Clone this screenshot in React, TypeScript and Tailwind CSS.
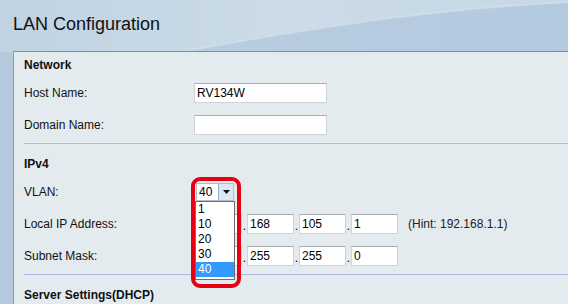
import React from "react";

const font = { fontFamily: '"Liberation Sans", Arial, sans-serif' };

function Row({ label, children }: { label: string; children?: React.ReactNode }) {
  return (
    <div className="flex items-center h-[32px]">
      <div className="w-[170px] text-[12px] text-[#111]">{label}</div>
      <div className="flex items-center">{children}</div>
    </div>
  );
}

function TextBox({ value = "", w }: { value?: string; w: string }) {
  return (
    <div
      className={`${w} h-[20px] bg-white border border-[#d0d4d8] border-t-[#a8acb0] pl-[2px] text-[12px] leading-[18px] text-black`}
    >
      {value}
    </div>
  );
}

function Ip({ parts }: { parts: string[] }) {
  return (
    <div className="flex items-center ml-px">
      {parts.map((p, i) => (
        <React.Fragment key={i}>
          {i > 0 && <span className="w-[5px] text-[12px] leading-[20px] pt-[3px] text-center">.</span>}
          <TextBox value={p} w="w-[47px]" />
        </React.Fragment>
      ))}
    </div>
  );
}

function Heading({ children, first }: { children: React.ReactNode; first?: boolean }) {
  return (
    <div className={`${first ? "" : "pt-[7px]"} h-[25px] flex items-center font-bold text-[12px] text-[#111] box-content`}>
      {children}
    </div>
  );
}

function Sep() {
  return <div className="mt-[2px] h-px bg-[#b3b5e3]" />;
}

export default function App() {
  return (
    <div className="w-[568px] h-[304px] overflow-hidden relative bg-[#b6cade]" style={font}>
      <svg className="absolute left-0 top-0" width="568" height="52" viewBox="0 0 568 52">
        <defs>
          <linearGradient id="g1" x1="0" y1="0" x2="1" y2="0">
            <stop offset="0" stopColor="#c1d3e3" />
            <stop offset="0.5" stopColor="#cbdbe7" />
            <stop offset="1" stopColor="#c6d8e6" />
          </linearGradient>
          <linearGradient id="g2" x1="0" y1="0" x2="1" y2="0">
            <stop offset="0" stopColor="#b9cde0" />
            <stop offset="1" stopColor="#b4cadf" />
          </linearGradient>
        </defs>
        <rect width="568" height="52" fill="url(#g1)" />
        <path d="M180 52 C 300 30, 420 10, 568 2 L568 52 Z" fill="url(#g2)" />
        <path d="M180 52 C 300 30, 420 10, 568 2" stroke="#d3e0ea" strokeWidth="2" fill="none" opacity="0.7" />
      </svg>
      <div className="relative h-[51px] pl-[13px] pt-[15px] text-[18px] leading-[18px] text-[#111]">
        LAN Configuration
      </div>
      <div className="relative flex">
        <div className="w-[13px] shrink-0" />
        <div className="flex-1 h-[260px] bg-[#e4ebef] border-t border-l border-t-[#7f8e9c] border-l-[#8c9aa8] pl-[10px]">
          <Heading first>Network</Heading>
          <Row label="Host Name:">
            <TextBox value="RV134W" w="w-[133px]" />
          </Row>
          <Row label="Domain Name:">
            <TextBox w="w-[133px]" />
          </Row>
          <Sep />
          <Heading>IPv4</Heading>
          <div className="relative z-10">
            <Row label="VLAN:">
              <div className="relative ml-[2px] w-[38px] h-[18px] bg-white border border-[#b4bcc6] flex">
                <div className="flex-1 text-[12px] leading-[16px] pl-[2px] text-black">40</div>
                <div className="w-[15px] h-full bg-[#dbe7f4] border-l border-[#8eacd2] flex items-center justify-center">
                  <svg width="7" height="4" viewBox="0 0 7 4">
                    <path d="M0 0 H7 L3.5 4 Z" fill="#111" />
                  </svg>
                </div>
                <div className="absolute left-[-2px] top-[17px] w-[40px] bg-white border border-[#6c6c6c] text-[12px]">
                  {["1", "10", "20", "30", "40"].map((v) => (
                    <div
                      key={v}
                      className={`h-[15px] leading-[15px] pl-[2px] ${v === "40" ? "bg-[#3399ff] text-white" : "text-black"}`}
                    >
                      {v}
                    </div>
                  ))}
                  <div className="h-[2px]" />
                </div>
                <div className="absolute left-[-6px] top-[-7px] w-[50px] h-[111px] border-4 border-[#e60012] rounded-[9px]" />
              </div>
            </Row>
          </div>
          <Row label="Local IP Address:">
            <Ip parts={["", "168", "105", "1"]} />
            <span className="ml-[10px] text-[12px] text-[#222]">(Hint: 192.168.1.1)</span>
          </Row>
          <Row label="Subnet Mask:">
            <Ip parts={["", "255", "255", "0"]} />
          </Row>
          <Sep />
          <Heading>Server Settings(DHCP)</Heading>
        </div>
      </div>
    </div>
  );
}
